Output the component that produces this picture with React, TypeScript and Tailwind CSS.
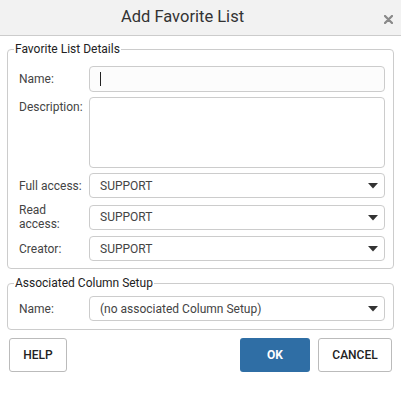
import React from "react";

const Caret = () => (
  <svg width="10" height="6" viewBox="0 0 10 6" className="absolute right-[6px] top-[9px]">
    <path d="M0 0 H10 L5 5.5 Z" fill="#333" />
  </svg>
);

const Select = ({ value }: { value: string }) => (
  <div className="relative flex-1 h-[25px] rounded border border-[#ccc] bg-white pl-[10px] flex items-center text-[12px] text-[#444]">
    {value}
    <Caret />
  </div>
);

const Row = ({ label, children, top }: { label: React.ReactNode; children: React.ReactNode; top?: boolean }) => (
  <div className={"flex " + (top ? "items-start" : "items-center")}>
    <div className={"w-[70px] shrink-0 text-[12px] leading-[14px] text-[#444] " + (top ? "pt-[3px]" : "")}>{label}</div>
    {children}
  </div>
);

export default function App() {
  return (
    <div className="w-[401px] h-[395px] bg-white font-['Roboto',sans-serif] text-[#333]">
      <header className="h-[36px] bg-[#f2f2f2] border-b border-[#ccc] relative flex items-center justify-center">
        <span className="text-[16.5px] text-[#333] -ml-[36px]">Add Favorite List</span>
        <svg width="9" height="9" viewBox="0 0 9 9" className="absolute right-[8px] top-[15px]">
          <path d="M1 1 L8 8 M8 1 L1 8" stroke="#8a8a8a" strokeWidth="2.3" strokeLinecap="round" />
        </svg>
      </header>

      <fieldset className="mx-[7px] mt-[6px] border border-[#ccc] rounded-[4px] pl-[11px] pr-[8px] pb-[7px] pt-[10px] flex flex-col gap-[5px]">
        <legend className="text-[12px] leading-[14px] text-[#222] -ml-[5px] px-[1px]">Favorite List Details</legend>
        <Row label="Name:">
          <div className="flex-1 h-[26px] rounded border border-[#ccc] bg-[#fcfcfc] flex items-center pl-[10px]">
            <span className="w-px h-[14px] bg-[#222]" />
          </div>
        </Row>
        <Row label="Description:" top>
          <div className="flex-1 h-[71px] rounded border border-[#ccc] bg-white" />
        </Row>
        <Row label="Full access:">
          <Select value="SUPPORT" />
        </Row>
        <Row label={<>Read<br />access:</>}>
          <Select value="SUPPORT" />
        </Row>
        <Row label="Creator:">
          <Select value="SUPPORT" />
        </Row>
      </fieldset>

      <fieldset className="mx-[7px] mt-[7px] border border-[#ccc] rounded-[4px] pl-[11px] pr-[8px] pb-[8px] pt-[6px]">
        <legend className="text-[12px] leading-[14px] text-[#222] -ml-[5px] px-[1px]">Associated Column Setup</legend>
        <Row label="Name:">
          <Select value="(no associated Column Setup)" />
        </Row>
      </fieldset>

      <div className="flex items-center mx-[9px] mt-[8px]">
        <button className="w-[58px] h-[34px] border border-[#bbb] rounded-[3px] bg-white text-[12px] font-medium text-[#222]">HELP</button>
        <div className="flex-1" />
        <button className="w-[70px] h-[34px] rounded-[3px] bg-[#2f6ea5] text-[12px] font-bold text-white">OK</button>
        <button className="ml-[8px] w-[74px] h-[34px] border border-[#bbb] rounded-[3px] bg-white text-[12px] font-medium text-[#222]">CANCEL</button>
      </div>
    </div>
  );
}
